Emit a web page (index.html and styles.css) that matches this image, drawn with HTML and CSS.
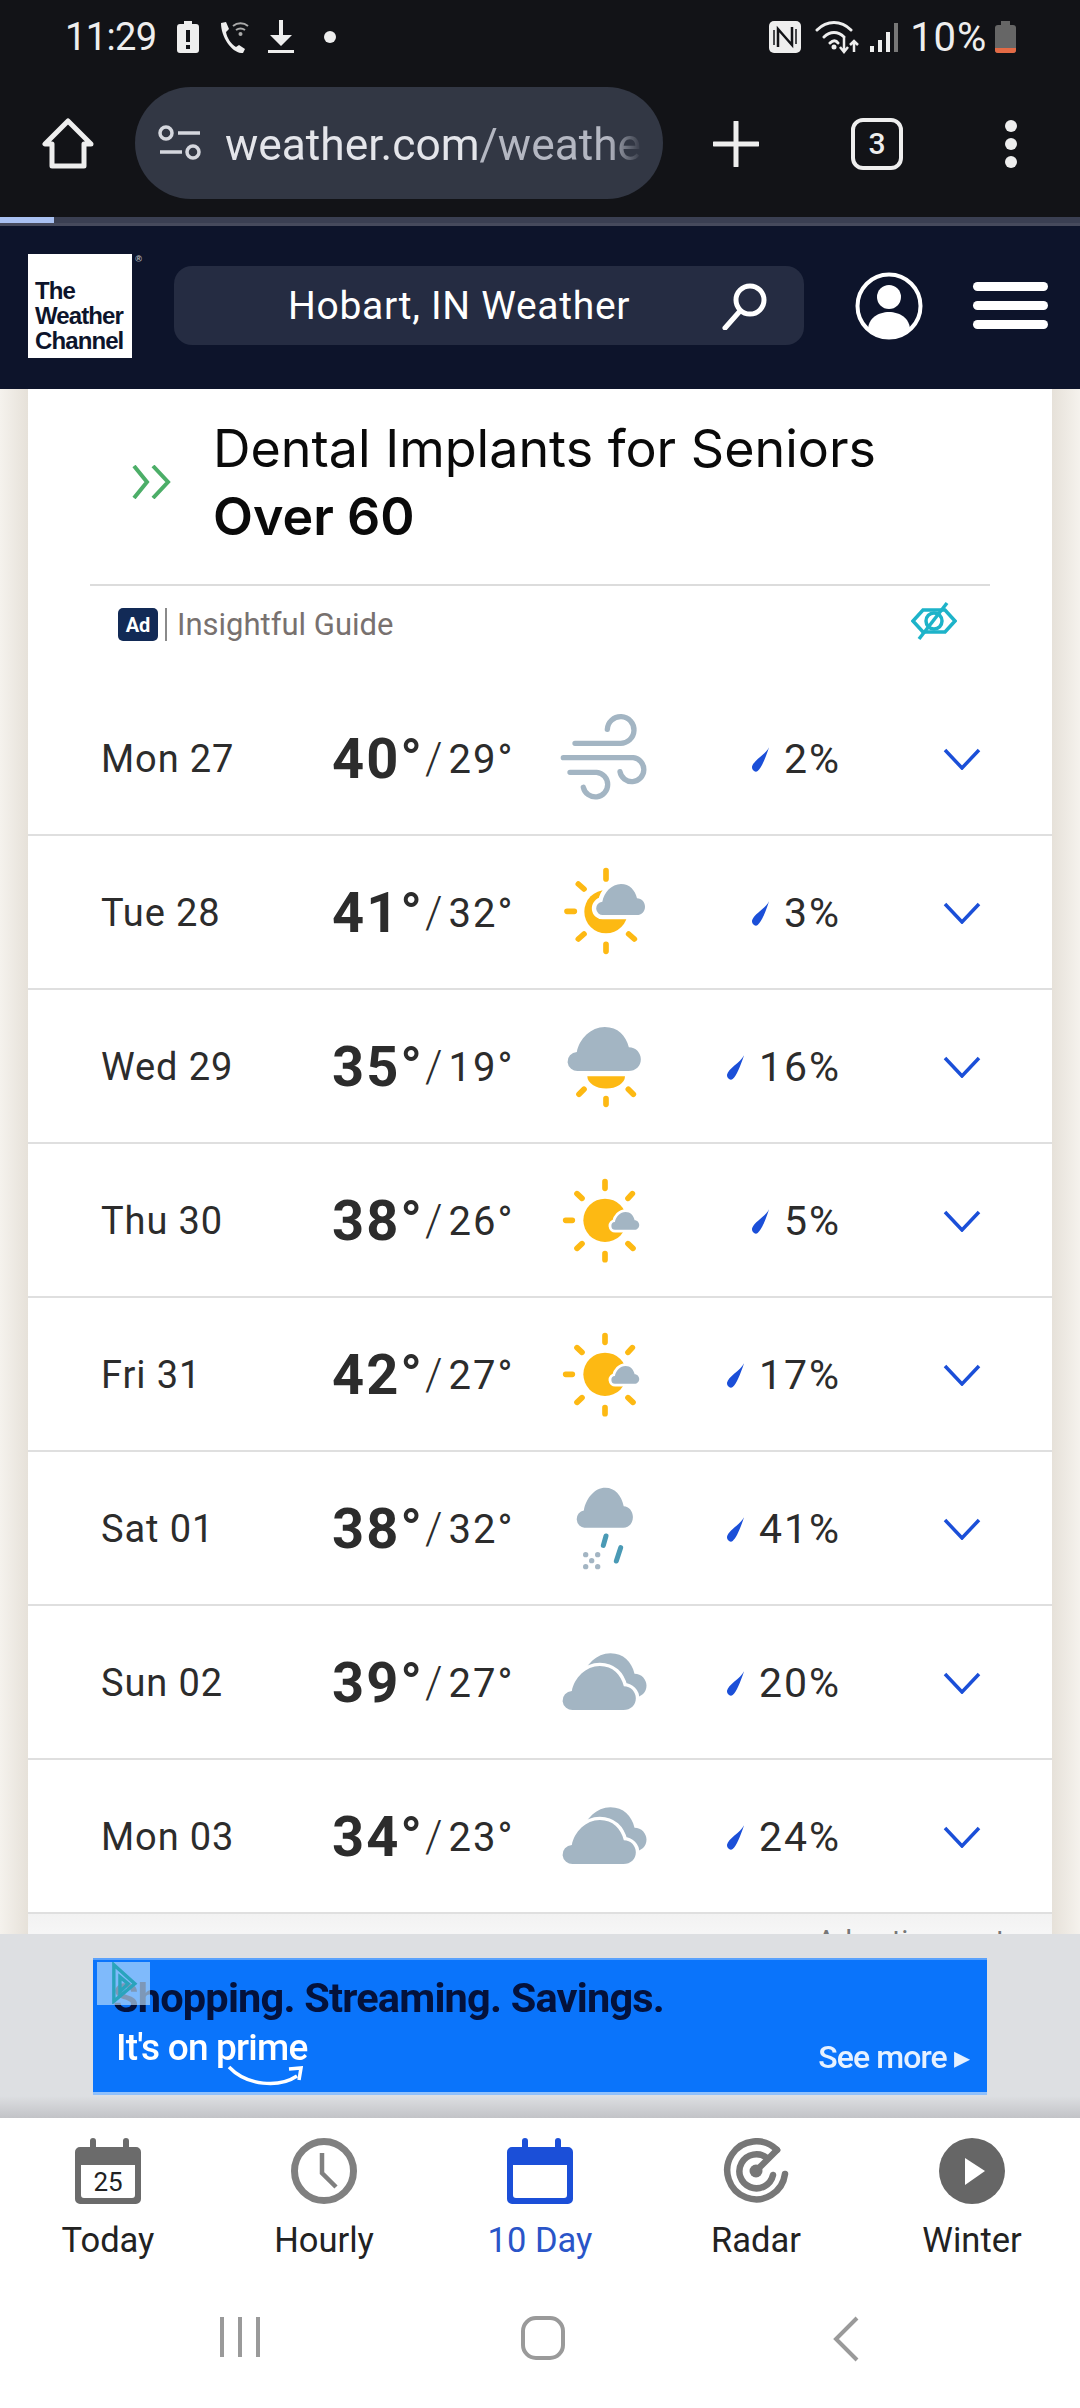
FILE: index.html
```html
<!DOCTYPE html>
<html>
<head>
<meta http-equiv="Content-Type" content="text/html; charset=utf-8"/>
<title>Hobart, IN 10 Day Weather</title>
<link rel="stylesheet" href="styles.css">
</head>
<body>

<svg class="defs" xmlns="http://www.w3.org/2000/svg">
  <defs>
    <path id="cloud" d="M20 93a20 20 0 0 1-3-40c5-28 28-53 56-53c26 0 42 18 48 43c14 0 24 12 24 25c0 14-10 25-25 25z"/>
    <symbol id="i-wind" viewBox="0 0 300 300">
      <path class="wind" d="M60 103H195a40 40 0 1 0-38-42"/>
      <path class="wind" d="M25 146H235a36 36 0 1 1-40 42"/>
      <path class="wind" d="M45 190H125a37 37 0 1 1-40 45"/>
    </symbol>
    <symbol id="i-suncloud" viewBox="0 0 300 300">
      <path class="ray" d="M153 23V48M153 244V265M36 145H58M70 63L87 78M70 228L87 213M221 213L238 228"/>
      <circle class="sun" cx="153" cy="146" r="65"/>
      <use href="#cloud" class="cl halo" transform="translate(125 63)"/>
    </symbol>
    <symbol id="i-cloudsun" viewBox="0 0 300 300">
      <path class="sun" d="M97 178H210A56 36 0 0 1 97 178z"/>
      <path class="ray" d="M72 232L87 217M220 217L235 232M153 245V262"/>
      <use href="#cloud" class="cl" transform="translate(40 30) scale(1.5 1.42)"/>
    </symbol>
    <symbol id="i-sun" viewBox="0 0 300 300">
      <path class="ray" d="M150 32V52M150 248V266M32 148H52M66 68L81 82M219 82L232 68M66 232L81 218M219 218L234 232"/>
      <circle class="sun" cx="150" cy="148" r="65"/>
      <use href="#cloud" class="cl halo-sm" transform="translate(170 123) scale(.57)"/>
    </symbol>
    <symbol id="i-rainsnow" viewBox="0 0 300 300">
      <use href="#cloud" class="cl" transform="translate(67 26) scale(1.15 1.29)"/>
      <path class="rain" d="M153 171L145 199M197 206L184 246"/>
      <circle class="cl" cx="92" cy="227" r="8"/>
      <circle class="cl" cx="128" cy="227" r="8"/>
      <circle class="cl" cx="110" cy="245" r="8"/>
      <circle class="cl" cx="92" cy="263" r="8"/>
      <circle class="cl" cx="128" cy="263" r="8"/>
    </symbol>
    <symbol id="i-clouds" viewBox="0 0 300 300">
      <use href="#cloud" class="cl" transform="translate(57 61) scale(1.5 1.42)"/>
      <use href="#cloud" class="cl halo-lg" transform="translate(25 99) scale(1.5 1.42)"/>
    </symbol>
    <symbol id="i-drop" viewBox="0 0 20 26">
      <path d="M19 0C15 8 2 14 1 21c0 4 4 6 6 4c4-3 8-13 12-25z"/>
    </symbol>
    <symbol id="i-chev" viewBox="0 0 38 22">
      <path d="M2 2L19 20L36 2"/>
    </symbol>
    <symbol id="i-cal" viewBox="0 0 66 66">
      <path d="M18 10V3M51 10V3" class="peg"/>
      <path fill-rule="evenodd" d="M5 9H61a5 5 0 0 1 5 5V61a5 5 0 0 1-5 5H5a5 5 0 0 1-5-5V14a5 5 0 0 1 5-5zM6 27V57a3 3 0 0 0 3 3H57a3 3 0 0 0 3-3V27z"/>
    </symbol>
  </defs>
</svg>

<div class="status">
  <div class="status-left">
    <span class="clock">11:29</span>
    <svg width="24" height="34" viewBox="0 0 24 34"><path fill="#eee" d="M8 1h8v3h4a3 3 0 0 1 3 3v23a3 3 0 0 1-3 3H4a3 3 0 0 1-3-3V7a3 3 0 0 1 3-3h4z"/><path fill="#121317" d="M10 10h4v12h-4zM10 25h4v4h-4z"/></svg>
    <svg width="30" height="32" viewBox="0 0 30 32"><path fill="#eee" d="M2 2l5-1 3 7-3 3c1 6 5 12 10 15l3-2 6 4-2 4c-10 1-22-15-22-30z"/><path fill="none" stroke="#aaa" stroke-width="2" d="M14 5a12 12 0 0 1 15 0M17 9a8 8 0 0 1 9 0"/><circle cx="21.500" cy="13" r="2" fill="#aaa"/></svg>
    <svg width="26" height="34" viewBox="0 0 26 34"><path fill="#eee" d="M11 0h4v15h9L13 26 2 15h9zM0 30h26v3H0z"/></svg>
    <span class="status-dot"></span>
  </div>
  <div class="status-right">
    <svg width="32" height="32" viewBox="0 0 32 32"><rect width="32" height="32" rx="5" fill="#eee"/><path fill="none" stroke="#121317" stroke-width="2.500" d="M9 26V8l14 16V6"/><path fill="none" stroke="#121317" stroke-width="1.500" d="M5 9V24M27 8V23"/></svg>
    <svg width="46" height="34" viewBox="0 0 46 34"><path fill="none" stroke="#eee" stroke-width="3" stroke-linecap="round" d="M2 10c10-10 24-10 34 0M9 17c6-6 14-6 20 0M15 23c3-3 6-3 8 0"/><circle cx="19" cy="27" r="2.500" fill="#eee"/><path fill="none" stroke="#eee" stroke-width="2.500" d="M29 18v14M25 27l4 5 4-5M39 32V21M35 25l4-4 4 4"/></svg>
    <svg width="28" height="32" viewBox="0 0 28 32"><path fill="#eee" d="M0 25h4v6H0zM8 19h4v12H8zM16 11h4v20h-4z"/><path fill="#777" d="M24 2h4v29h-4z"/></svg>
    <span class="batt-txt">10%</span>
    <div class="batt"><span class="batt-cap"></span><span class="batt-low"></span></div>
  </div>
</div>

<div class="toolbar">
  <svg class="home" width="52" height="52" viewBox="0 0 52 52"><path d="M26 3L3 26H10V48H42V26H49z"/></svg>
  <div class="urlbar">
    <svg width="44" height="36" viewBox="0 0 44 36"><g fill="none" stroke="#d5d7de" stroke-width="3.500"><circle cx="8" cy="8" r="6"/><circle cx="35" cy="27" r="6"/><path d="M20 8H42M2 27H24"/></g></svg>
    <div class="url"><span class="url-host">weather.com</span><span class="url-path">/weathe</span></div>
  </div>
  <svg class="plus" width="46" height="46" viewBox="0 0 46 46"><path d="M23 1V45M1 23H45"/></svg>
  <div class="tabs">3</div>
  <div class="menu"><span></span><span></span><span></span></div>
</div>
<div class="progress"><div class="progress-fill"></div></div>

<header class="twc">
  <div class="logo"><span class="reg">®</span>The<br>Weather<br>Channel</div>
  <div class="search">
    <span class="search-txt">Hobart, IN Weather</span>
    <svg width="46" height="48" viewBox="0 0 46 48"><circle cx="28" cy="18" r="14"/><path d="M18 29L3 46"/></svg>
  </div>
  <svg class="user" width="68" height="68" viewBox="0 0 68 68"><circle cx="34" cy="34" r="31.500" fill="none" stroke="#fff" stroke-width="4"/><circle cx="34" cy="25" r="12" fill="#fff"/><path fill="#fff" d="M13 58c0-24 42-24 42 0c-12 9-30 9-42 0z"/></svg>
  <div class="burger"><span></span><span></span><span></span></div>
</header>

<main class="content">
  <div class="card">
    <section class="promo">
      <div class="promo-main">
        <svg class="promo-chev" width="40" height="34" viewBox="0 0 40 34"><path d="M2 1L15 17L2 33M21 1L36 17L21 33"/></svg>
        <div class="promo-txt">Dental Implants for Seniors<br><b>Over 60</b></div>
      </div>
      <div class="promo-foot">
        <span class="ad-badge">Ad</span>
        <span class="ad-src">Insightful Guide</span>
        <svg class="ad-eye" width="46" height="40" viewBox="0 0 46 40"><path d="M2 20L12 9H34L44 20L34 31H12z"/><circle cx="23" cy="20" r="8"/><path d="M36 2L8 38"/></svg>
      </div>
    </section>

    <div class="row">
      <span class="day">Mon 27</span>
      <span class="temps"><b>40°</b><i>/</i><span>29°</span></span>
      <svg class="wx"><use href="#i-wind"/></svg>
      <span class="rain-pct"><svg class="drop"><use href="#i-drop"/></svg>2%</span>
      <svg class="chev"><use href="#i-chev"/></svg>
    </div>
    <div class="row">
      <span class="day">Tue 28</span>
      <span class="temps"><b>41°</b><i>/</i><span>32°</span></span>
      <svg class="wx"><use href="#i-suncloud"/></svg>
      <span class="rain-pct"><svg class="drop"><use href="#i-drop"/></svg>3%</span>
      <svg class="chev"><use href="#i-chev"/></svg>
    </div>
    <div class="row">
      <span class="day">Wed 29</span>
      <span class="temps"><b>35°</b><i>/</i><span>19°</span></span>
      <svg class="wx"><use href="#i-cloudsun"/></svg>
      <span class="rain-pct"><svg class="drop"><use href="#i-drop"/></svg>16%</span>
      <svg class="chev"><use href="#i-chev"/></svg>
    </div>
    <div class="row">
      <span class="day">Thu 30</span>
      <span class="temps"><b>38°</b><i>/</i><span>26°</span></span>
      <svg class="wx"><use href="#i-sun"/></svg>
      <span class="rain-pct"><svg class="drop"><use href="#i-drop"/></svg>5%</span>
      <svg class="chev"><use href="#i-chev"/></svg>
    </div>
    <div class="row">
      <span class="day">Fri 31</span>
      <span class="temps"><b>42°</b><i>/</i><span>27°</span></span>
      <svg class="wx"><use href="#i-sun"/></svg>
      <span class="rain-pct"><svg class="drop"><use href="#i-drop"/></svg>17%</span>
      <svg class="chev"><use href="#i-chev"/></svg>
    </div>
    <div class="row">
      <span class="day">Sat 01</span>
      <span class="temps"><b>38°</b><i>/</i><span>32°</span></span>
      <svg class="wx"><use href="#i-rainsnow"/></svg>
      <span class="rain-pct"><svg class="drop"><use href="#i-drop"/></svg>41%</span>
      <svg class="chev"><use href="#i-chev"/></svg>
    </div>
    <div class="row">
      <span class="day">Sun 02</span>
      <span class="temps"><b>39°</b><i>/</i><span>27°</span></span>
      <svg class="wx"><use href="#i-clouds"/></svg>
      <span class="rain-pct"><svg class="drop"><use href="#i-drop"/></svg>20%</span>
      <svg class="chev"><use href="#i-chev"/></svg>
    </div>
    <div class="row">
      <span class="day">Mon 03</span>
      <span class="temps"><b>34°</b><i>/</i><span>23°</span></span>
      <svg class="wx"><use href="#i-clouds"/></svg>
      <span class="rain-pct"><svg class="drop"><use href="#i-drop"/></svg>24%</span>
      <svg class="chev"><use href="#i-chev"/></svg>
    </div>
    <div class="advert-label">Advertisement</div>
  </div>
</main>

<aside class="adbar">
  <div class="banner">
    <div class="banner-left">
      <div class="banner-head">Shopping. Streaming. Savings.</div>
      <div class="banner-sub">It's on prime</div>
      <svg class="smile" width="76" height="24" viewBox="0 0 76 24"><path d="M2 3C20 22 52 24 70 12"/><path d="M62 5L74 4L72 16"/></svg>
    </div>
    <div class="banner-more">See more ▸</div>
    <div class="adchoice"><svg width="40" height="62" viewBox="0 0 40 62"><path d="M5 4L36 32L5 58z"/><path d="M14 22L26 32L14 44z"/></svg></div>
  </div>
</aside>

<nav class="tabbar">
  <div class="tab">
    <span class="tab-cal"><svg class="tab-ico gray"><use href="#i-cal"/></svg><span class="tab-date">25</span></span>
    <span class="tab-lbl">Today</span>
  </div>
  <div class="tab">
    <svg class="tab-ico" viewBox="0 0 66 66"><circle class="clk" cx="33" cy="33" r="29.500"/><path class="clk hand" d="M31 15V35L45 49"/></svg>
    <span class="tab-lbl">Hourly</span>
  </div>
  <div class="tab active">
    <svg class="tab-ico blue"><use href="#i-cal"/></svg>
    <span class="tab-lbl">10 Day</span>
  </div>
  <div class="tab">
    <svg class="tab-ico" viewBox="0 0 66 66"><g class="radar"><path d="M54 12A29 29 0 1 0 62 36"/><path d="M44 20A17 17 0 1 0 50 37"/><path d="M33 33L54 12"/></g><circle cx="33" cy="33" r="6.500" fill="#777"/></svg>
    <span class="tab-lbl">Radar</span>
  </div>
  <div class="tab">
    <svg class="tab-ico" viewBox="0 0 66 66"><circle cx="33" cy="33" r="33" fill="#666"/><path fill="#fff" d="M26 20L46 33L26 47z"/></svg>
    <span class="tab-lbl">Winter</span>
  </div>
</nav>

<div class="sysnav">
  <svg width="40" height="42" viewBox="0 0 40 42"><path d="M2 1V41M20 1V41M38 1V41"/></svg>
  <svg width="44" height="44" viewBox="0 0 44 44"><rect x="2" y="2" width="40" height="40" rx="13"/></svg>
  <svg width="26" height="46" viewBox="0 0 26 46"><path d="M24 2L3 23L24 44"/></svg>
</div>

</body>
</html>
```

FILE: styles.css
```css
html, body {
  margin: 0;
  padding: 0;
}

body {
  width: 1080px;
  height: 2408px;
  overflow: hidden;
  display: flex;
  flex-direction: column;
  font-family: Roboto, "Liberation Sans", sans-serif;
  background-color: white;
}

.defs {
  position: absolute;
  width: 0;
  height: 0;
}

/* phone status bar */
.status {
  height: 70px;
  background: #121317;
  color: #eee;
  display: flex;
  justify-content: space-between;
  align-items: center;
  box-sizing: border-box;
  padding: 4px 64px 0 65px;
}

.status-left, .status-right {
  display: flex;
  align-items: center;
}

.status-left svg {
  margin-left: 19px;
}

.clock {
  font-size: 38px;
  letter-spacing: -.6px;
}

.status-dot {
  width: 12px;
  height: 12px;
  border-radius: 50%;
  background: #eee;
  margin-left: 30px;
}

.status-right svg {
  margin-right: 9px;
}

.status-right svg:first-child {
  margin-right: 14px;
}

.batt-txt {
  font-size: 40px;
  letter-spacing: .8px;
  margin-left: 3px;
  margin-right: 8px;
}

.batt {
  position: relative;
  width: 21px;
  height: 28px;
  margin-top: 4px;
  border-radius: 3px;
  background: #666;
}

.batt-cap {
  position: absolute;
  top: -4px;
  left: 6px;
  width: 9px;
  height: 4px;
  background: #666;
}

.batt-low {
  position: absolute;
  left: 0;
  right: 0;
  bottom: 0;
  height: 5px;
  background: #e36a45;
  border-radius: 0 0 3px 3px;
}

/* browser toolbar */
.toolbar {
  height: 147px;
  background: #121317;
  display: flex;
  align-items: center;
  box-sizing: border-box;
  padding: 0 0 0 42px;
}

.home {
  fill: none;
  stroke: #eee;
  stroke-width: 5;
  stroke-linejoin: round;
}

.urlbar {
  width: 528px;
  height: 112px;
  margin-left: 41px;
  margin-bottom: 2px;
  border-radius: 56px;
  background: #323744;
  display: flex;
  align-items: center;
  box-sizing: border-box;
  padding: 0 21px 0 23px;
}

.url {
  flex: 1;
  margin-left: 23px;
  padding-top: 4px;
  overflow: hidden;
  white-space: nowrap;
  font-size: 44.3px;
  -webkit-mask-image: linear-gradient(to right, #000 92%, transparent);
  mask-image: linear-gradient(to right, #000 92%, transparent);
}

.url-host {
  color: #e4e5ea;
}

.url-path {
  color: #b4b7c2;
}

.plus {
  margin-left: 50px;
  fill: none;
  stroke: #eee;
  stroke-width: 5;
  stroke-linecap: round;
}

.tabs {
  width: 44px;
  height: 44px;
  margin-left: 92px;
  border: 4px solid #eee;
  border-radius: 12px;
  color: #eee;
  font-size: 30px;
  font-weight: 500;
  display: flex;
  align-items: center;
  justify-content: center;
}

.menu {
  margin-left: 102px;
  display: flex;
  flex-direction: column;
  gap: 6px;
}

.menu span {
  width: 12px;
  height: 12px;
  border-radius: 50%;
  background: #eee;
}

.progress {
  height: 9px;
  box-sizing: border-box;
  background: #3a3f52;
  border-bottom: 3px solid #464a5c;
}

.progress-fill {
  width: 54px;
  height: 6px;
  background: #a9c1f2;
}

/* weather.com header */
.twc {
  height: 163px;
  background: #0d142b;
  display: flex;
  align-items: center;
  box-sizing: border-box;
  padding: 0 32px 4px 28px;
}

.logo {
  position: relative;
  width: 104px;
  height: 104px;
  box-sizing: border-box;
  padding: 24px 0 0 7px;
  background: white;
  color: #0d142b;
  font-family: "Liberation Sans", sans-serif;
  font-weight: bold;
  font-size: 24px;
  line-height: 25px;
  letter-spacing: -.9px;
}

.reg {
  position: absolute;
  top: -1px;
  right: -10px;
  font-size: 9px;
  line-height: 12px;
  letter-spacing: 0;
  color: #bbb;
}

.search {
  width: 630px;
  height: 79px;
  margin-left: 42px;
  border-radius: 18px;
  background: #252c42;
  display: flex;
  align-items: center;
  box-sizing: border-box;
  padding: 0 36px 0 114px;
  justify-content: space-between;
}

.search-txt {
  color: white;
  font-size: 39px;
  letter-spacing: .7px;
}

.search svg {
  fill: none;
  stroke: white;
  stroke-width: 5;
  stroke-linecap: round;
}

.user {
  margin-left: 51px;
}

.burger {
  margin-left: auto;
  display: flex;
  flex-direction: column;
  gap: 10px;
}

.burger span {
  width: 75px;
  height: 9px;
  border-radius: 5px;
  background: white;
}

/* page body */
.content {
  height: 1545px;
  overflow: hidden;
  background: linear-gradient(to right, #f5f2ed 0, #e6e1d9 28px, #e6e1d9 1052px, #f5f2ed 1080px);
  padding: 0 28px;
}

.card {
  background: white;
}

.promo {
  height: 293px;
  box-sizing: border-box;
}

.promo-main {
  height: 197px;
  box-sizing: border-box;
  margin: 0 62px;
  padding: 26px 0 0 42px;
  border-bottom: 2px solid #dcdcdc;
  display: flex;
  align-items: flex-start;
}

.promo-chev {
  margin-top: 50px;
  fill: none;
  stroke: #4cae68;
  stroke-width: 4;
}

.promo-txt {
  margin-left: 41px;
  font-family: Inter, "Noto Sans", sans-serif;
  font-size: 52px;
  line-height: 68px;
  color: #0a0a0a;
}

.promo-txt b {
  font-weight: 600;
}

.promo-foot {
  display: flex;
  align-items: center;
  margin: 22px 62px 0;
  padding: 0 33px 0 28px;
}

.ad-badge {
  width: 40px;
  height: 33px;
  border-radius: 5px;
  background: #122a56;
  color: white;
  font-size: 20px;
  font-weight: bold;
  display: flex;
  align-items: center;
  justify-content: center;
}

.ad-src {
  margin-left: 7px;
  padding-left: 10px;
  border-left: 2px solid #8a8a8a;
  line-height: 33px;
  font-size: 31px;
  color: #78716f;
}

.ad-eye {
  margin-left: auto;
  margin-top: -8px;
  fill: none;
  stroke: #1db3c9;
  stroke-width: 3.5;
}

.row {
  height: 154px;
  box-sizing: border-box;
  border-bottom: 2px solid #dfdfdf;
  padding-left: 73px;
  padding-top: 2px;
  display: flex;
  align-items: center;
  color: #2c2c2c;
}

.day {
  width: 231px;
  font-size: 38px;
  letter-spacing: .9px;
}

.temps {
  width: 223px;
  display: flex;
  align-items: center;
  font-size: 40px;
  letter-spacing: 2px;
  white-space: nowrap;
}

.temps b {
  font-size: 56px;
  font-weight: 700;
  letter-spacing: 2px;
}

.temps i {
  font-style: normal;
  font-size: 44px;
  font-weight: 300;
  letter-spacing: 0;
  margin: 0 6px 0 1px;
}

.wx {
  width: 100px;
  height: 100px;
}

.cl {
  fill: #a3b5c3;
}

.halo, .halo-sm, .halo-lg {
  stroke: white;
  paint-order: stroke;
}

.halo {
  stroke-width: 26;
}

.halo-sm {
  stroke-width: 30;
}

.halo-lg {
  stroke-width: 14;
}

.wind {
  fill: none;
  stroke: #a3b5c3;
  stroke-width: 16;
  stroke-linecap: round;
}

.sun {
  fill: #fdb913;
}

.ray {
  fill: none;
  stroke: #fdb913;
  stroke-width: 17;
  stroke-linecap: round;
}

.rain {
  fill: none;
  stroke: #4a9ab5;
  stroke-width: 15;
  stroke-linecap: round;
}

.rain-pct {
  width: 186px;
  display: flex;
  align-items: center;
  justify-content: flex-end;
  font-size: 41px;
  letter-spacing: 2px;
}

.drop {
  width: 19px;
  height: 25px;
  margin-right: 14px;
  fill: #1b4fd8;
}

.chev {
  width: 38px;
  height: 22px;
  margin-left: 102px;
  fill: none;
  stroke: #1b4fd8;
  stroke-width: 3.5;
}

.advert-label {
  height: 60px;
  box-sizing: border-box;
  padding: 10px 47px 0 0;
  text-align: right;
  font-size: 29px;
  color: #777;
  background: linear-gradient(#f2f2f2, white);
}

/* sticky ad */
.adbar {
  height: 184px;
  box-sizing: border-box;
  padding: 24px 93px 0;
  background: linear-gradient(#dddfe2 88%, #c2c3c7);
}

.banner {
  position: relative;
  height: 137px;
  box-sizing: border-box;
  background: #0a74fb;
  border-top: 2px solid #5aa2fc;
  border-bottom: 3px solid #8fc0fb;
  display: flex;
  justify-content: space-between;
  padding: 16px 18px 0 20px;
}

.banner-head {
  font-size: 41.5px;
  font-weight: 700;
  letter-spacing: -.8px;
  line-height: 44px;
  color: #04123c;
  filter: blur(.6px);
}

.banner-sub {
  margin: 9px 0 0 3px;
  font-size: 37px;
  font-weight: 500;
  line-height: 38px;
  letter-spacing: -.8px;
  color: white;
  filter: blur(.4px);
}

.smile {
  display: block;
  margin: -3px 0 0 114px;
  fill: none;
  stroke: white;
  stroke-width: 3.5;
}

.banner-more {
  align-self: flex-end;
  margin-bottom: 16px;
  font-size: 32px;
  font-weight: 500;
  letter-spacing: -.9px;
  color: #e6f1ff;
  filter: blur(.4px);
}

.adchoice {
  position: absolute;
  left: 4px;
  top: 2px;
  width: 53px;
  height: 43px;
  background: rgba(190, 225, 250, .65);
  display: flex;
  justify-content: center;
}

.adchoice svg {
  width: 30px;
  height: 42px;
  fill: none;
  stroke: #2aa4bd;
  stroke-width: 5;
}

/* bottom tabs */
.tabbar {
  height: 162px;
  box-sizing: border-box;
  padding-top: 20px;
  display: grid;
  grid-template-columns: repeat(5, 216px);
  background: white;
}

.tab {
  display: flex;
  flex-direction: column;
  align-items: center;
}

.tab-cal {
  position: relative;
  width: 66px;
  height: 66px;
}

.tab-ico {
  display: block;
  width: 66px;
  height: 66px;
}

.tab-ico.gray {
  fill: #6b6b6b;
  stroke: #6b6b6b;
  stroke-width: 0;
}

.tab-ico.blue {
  fill: #1b4fd8;
  stroke: #1b4fd8;
  stroke-width: 0;
}

.peg {
  stroke-width: 6;
  stroke-linecap: round;
}

.tab-date {
  position: absolute;
  left: 0;
  right: 0;
  top: 29px;
  text-align: center;
  font-size: 26px;
  line-height: 30px;
  color: #222;
}

.clk {
  fill: none;
  stroke: #808080;
  stroke-width: 7;
}

.hand {
  stroke-width: 4.5;
}

.radar {
  fill: none;
  stroke: #777;
  stroke-width: 6.5;
  stroke-linecap: round;
}

.tab-lbl {
  margin-top: 16px;
  font-size: 34.5px;
  line-height: 40px;
  color: #222;
}

.tab.active .tab-lbl {
  color: #2a55c8;
}

/* android nav */
.sysnav {
  flex: 1;
  box-sizing: border-box;
  padding: 36px 0 0 220px;
  display: flex;
  align-items: flex-start;
  background: white;
}

.sysnav svg {
  fill: none;
  stroke: #9a9a9a;
  stroke-width: 4;
}

.sysnav svg + svg {
  margin-left: 261px;
}

.sysnav svg + svg + svg {
  margin-left: 268px;
}
```
